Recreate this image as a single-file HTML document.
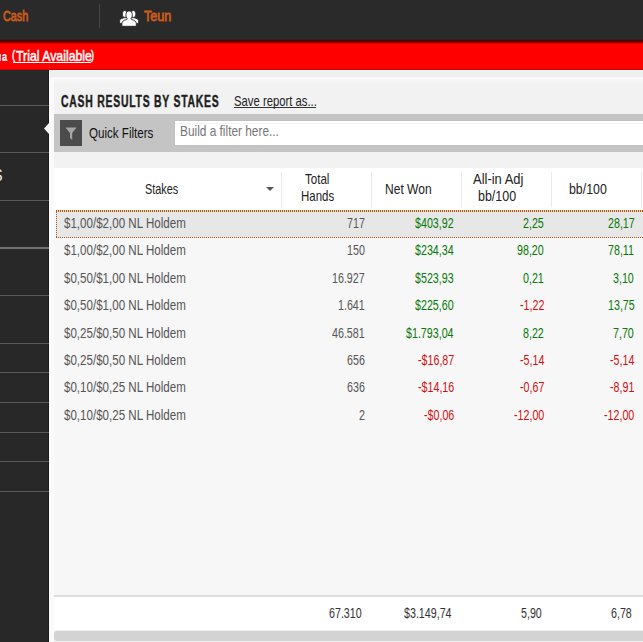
<!DOCTYPE html>
<html><head><meta charset="utf-8">
<style>
html,body{margin:0;padding:0}
body{width:643px;height:642px;overflow:hidden;position:relative;background:#efefef;font-family:"Liberation Sans",sans-serif}
.a{position:absolute}
.t{position:absolute;white-space:pre;line-height:normal;transform-origin:0 0;font-family:"Liberation Sans",sans-serif}
.u{text-decoration:underline}
</style></head><body>
<!-- top bar -->
<div class="a" style="left:0;top:0;width:643px;height:39px;background:#2a2a2a"></div>
<div class="a" style="left:0;top:39px;width:643px;height:5px;background:linear-gradient(#322424,#4e0303 35%,#5a0000 50%,#b00000 75%,#f80000)"></div>
<div class="a" style="left:99px;top:4px;width:1px;height:24px;background:#444"></div>
<!-- people icon -->
<svg class="a" style="left:110px;top:0px" width="40" height="40" viewBox="0 0 40 40">
  <g fill="#fff" stroke="#1e1e1e" stroke-width="0.8">
    <ellipse cx="14.8" cy="14" rx="2.5" ry="3.5"/>
    <ellipse cx="23.4" cy="14" rx="2.5" ry="3.5"/>
    <path d="M9.6 23.4 V20.8 Q9.6 18.6 13.2 18 L15 17.6 H17.5 V23.4 Z"/>
    <path d="M28.6 23.4 V20.8 Q28.6 18.6 25 18 L23.2 17.6 H20.7 V23.4 Z"/>
  </g>
  <g fill="#fff" stroke="#1e1e1e" stroke-width="0.85">
    <path d="M19.1 10.9 C21.1 10.9 22.3 12.4 22.3 14.8 C22.3 16.6 21.7 17.9 21 18.5 L21.3 19.4 C24.8 20.2 26.3 21.6 26.3 23.6 L26.3 26.3 L11.9 26.3 L11.9 23.6 C11.9 21.6 13.4 20.2 16.9 19.4 L17.2 18.5 C16.5 17.9 15.9 16.6 15.9 14.8 C15.9 12.4 17.1 10.9 19.1 10.9 Z"/>
  </g>
</svg>
<!-- red bar -->
<div class="a" style="left:0;top:44px;width:643px;height:25px;background:#ff0000"></div>
<div class="a" style="left:0;top:69px;width:643px;height:1px;background:#cf0000"></div>
<div class="a" style="left:13px;top:62px;width:78px;height:1px;background:#fff"></div>
<div class="a" style="left:0;top:54px;width:1px;height:7px;background:#ffb8b8"></div>
<!-- sidebar -->
<div class="a" style="left:0;top:70px;width:49px;height:572px;background:#282828"></div>
<div class="a" style="left:48px;top:70px;width:1px;height:572px;background:#1c1c1c"></div>
<div class="a" style="left:0;top:105px;width:49px;height:1px;background:#5a5a5a"></div>
<div class="a" style="left:0;top:152px;width:49px;height:1px;background:#5a5a5a"></div>
<div class="a" style="left:0;top:200px;width:49px;height:1px;background:#5a5a5a"></div>
<div class="a" style="left:0;top:247px;width:49px;height:2px;background:#707070"></div>
<div class="a" style="left:0;top:295px;width:49px;height:1px;background:#5a5a5a"></div>
<div class="a" style="left:0;top:343px;width:49px;height:1px;background:#5a5a5a"></div>
<div class="a" style="left:0;top:372px;width:49px;height:1px;background:#5a5a5a"></div>
<div class="a" style="left:0;top:402px;width:49px;height:1px;background:#5a5a5a"></div>
<div class="a" style="left:0;top:432px;width:49px;height:1px;background:#5a5a5a"></div>
<div class="a" style="left:0;top:461px;width:49px;height:1px;background:#5a5a5a"></div>
<div class="a" style="left:0;top:491px;width:49px;height:1px;background:#5a5a5a"></div>
<!-- partial s glyph -->
<div class="a" style="left:-8px;top:167px;font:16px 'Liberation Sans';color:#e4e4e4;line-height:normal">S</div>
<!-- arrow notch -->
<svg class="a" style="left:43px;top:122px" width="7" height="13"><path d="M1 6.5 L6 1 L6 12 Z" fill="#f4f4f4"/></svg>
<!-- main panel -->
<div class="a" style="left:49px;top:70px;width:594px;height:572px;background:#efefef"></div>
<div class="a" style="left:49px;top:70px;width:594px;height:1px;background:#fbfbfb"></div>
<div class="a" style="left:49px;top:70px;width:1px;height:572px;background:#fafafa"></div>
<div class="a" style="left:52px;top:77px;width:591px;height:565px;background:#f2f2f2"></div>
<div class="a" style="left:52px;top:77px;width:591px;height:5px;background:linear-gradient(#fbfbfb,#f9f9f9 40%,#f3f3f3)"></div>
<div class="a" style="left:50px;top:78px;width:4px;height:564px;background:#fafafa"></div>
<!-- filter bar -->
<div class="a" style="left:54px;top:114px;width:589px;height:38px;background:#c4c4c4"></div>
<div class="a" style="left:60px;top:120px;width:22px;height:26px;background:#4b4b4b"></div>
<svg class="a" style="left:64px;top:126px" width="14" height="16"><path d="M1.5 1.5 H12.5 L8.2 7 V14 L6 12 V7 Z" fill="#a6a6a6"/></svg>
<div class="a" style="left:174px;top:120px;width:469px;height:26px;background:#fff;box-sizing:border-box;border:1px solid #c0c0c0;border-right:none"></div>
<div class="a" style="left:175px;top:123px;width:468px;height:1px;background:#f3f3f3"></div>
<!-- table header -->
<div class="a" style="left:54px;top:168px;width:589px;height:42px;background:#fff"></div>
<div class="a" style="left:281px;top:172px;width:1px;height:35px;background:#eaeaea"></div>
<div class="a" style="left:371px;top:172px;width:1px;height:35px;background:#eaeaea"></div>
<div class="a" style="left:461px;top:172px;width:1px;height:35px;background:#eaeaea"></div>
<div class="a" style="left:551px;top:172px;width:1px;height:35px;background:#eaeaea"></div>
<div class="a" style="left:641px;top:172px;width:1px;height:35px;background:#eaeaea"></div>
<svg class="a" style="left:265px;top:186px" width="10" height="6"><path d="M1 1 H9 L5 5 Z" fill="#555"/></svg>
<!-- table body -->
<div class="a" style="left:54px;top:210px;width:589px;height:385px;background:#f7f7f7"></div>
<!-- selected row -->
<div class="a" style="left:56px;top:210px;width:587px;height:28px;background:#e7e7e7"></div>
<div class="a" style="left:56px;top:210px;width:587px;height:2px;background:repeating-linear-gradient(90deg,#a85a1c 0 1px,#f3d9b8 1px 2px)"></div>
<div class="a" style="left:56px;top:237px;width:587px;height:1px;background:repeating-linear-gradient(90deg,#9a5a2a 0 1px,#f7e3cc 1px 2px)"></div>
<div class="a" style="left:56px;top:212px;width:1px;height:25px;background:repeating-linear-gradient(180deg,#9a5a2a 0 1px,#f7e3cc 1px 2px)"></div>
<!-- footer -->
<div class="a" style="left:54px;top:595px;width:589px;height:2px;background:#dedede"></div>
<div class="a" style="left:54px;top:597px;width:589px;height:33px;background:#fff"></div>
<div class="a" style="left:54px;top:630.5px;width:589px;height:10.5px;background:#d3d3d3;border-radius:3px 0 0 3px"></div>
<div class="a" style="left:54px;top:641px;width:589px;height:1px;background:#efefef"></div>
<div class="a" style="left:234px;top:107px;width:82px;height:1px;background:#333"></div>
<span class="t" style="left:3.10px;top:8.00px;font-size:14.5px;font-weight:400;color:#c95c1b;transform:scaleX(0.7485);letter-spacing:0px;-webkit-text-stroke:0.8px currentColor">Cash</span>
<span class="t" style="left:144.00px;top:8.00px;font-size:14.5px;font-weight:400;color:#c95c1b;transform:scaleX(0.8710);letter-spacing:0px;-webkit-text-stroke:0.8px currentColor">Teun</span>
<span class="t" style="left:1.60px;top:49.00px;font-size:13px;font-weight:700;color:#fff;transform:scaleX(0.7000);letter-spacing:0px;-webkit-text-stroke:0.2px currentColor">a</span>
<span class="t" style="left:11.70px;top:47.70px;font-size:12.4px;font-weight:400;color:#fff;transform:scaleX(0.7750);letter-spacing:0px;-webkit-text-stroke:0.5px currentColor">(</span>
<span class="t" style="left:15.50px;top:47.50px;font-size:14.5px;font-weight:400;color:#fff;transform:scaleX(0.8483);letter-spacing:0px;-webkit-text-stroke:0.5px currentColor">Trial Available</span>
<span class="t" style="left:91.30px;top:47.70px;font-size:12.4px;font-weight:400;color:#fff;transform:scaleX(0.7250);letter-spacing:0px;-webkit-text-stroke:0.5px currentColor">)</span>
<span class="t" style="left:61.00px;top:93.00px;font-size:16px;font-weight:700;color:#1e1e1e;transform:scaleX(0.6490);letter-spacing:1.2px;-webkit-text-stroke:0.45px currentColor">CASH RESULTS BY STAKES</span>
<span class="t" style="left:233.70px;top:92.70px;font-size:14.2px;font-weight:400;color:#222;transform:scaleX(0.7961);letter-spacing:0px;-webkit-text-stroke:0px currentColor">Save report as...</span>
<span class="t" style="left:88.50px;top:125.00px;font-size:14.8px;font-weight:400;color:#111;transform:scaleX(0.7829);letter-spacing:0px;-webkit-text-stroke:0px currentColor">Quick Filters</span>
<span class="t" style="left:179.50px;top:122.90px;font-size:14.8px;font-weight:400;color:#767676;transform:scaleX(0.8017);letter-spacing:0px;-webkit-text-stroke:0px currentColor">Build a filter here...</span>
<span class="t" style="left:144.55px;top:181.00px;font-size:14.5px;font-weight:400;color:#222;transform:scaleX(0.7512);letter-spacing:0px;-webkit-text-stroke:0px currentColor">Stakes</span>
<span class="t" style="left:305.20px;top:171.00px;font-size:14.5px;font-weight:400;color:#222;transform:scaleX(0.7967);letter-spacing:0px;-webkit-text-stroke:0px currentColor">Total</span>
<span class="t" style="left:301.21px;top:188.00px;font-size:14.5px;font-weight:400;color:#222;transform:scaleX(0.7902);letter-spacing:0px;-webkit-text-stroke:0px currentColor">Hands</span>
<span class="t" style="left:384.67px;top:181.00px;font-size:14.5px;font-weight:400;color:#222;transform:scaleX(0.8309);letter-spacing:0px;-webkit-text-stroke:0px currentColor">Net Won</span>
<span class="t" style="left:473.10px;top:171.00px;font-size:14.5px;font-weight:400;color:#222;transform:scaleX(0.8929);letter-spacing:0px;-webkit-text-stroke:0px currentColor">All-in Adj</span>
<span class="t" style="left:478.44px;top:188.00px;font-size:14.5px;font-weight:400;color:#222;transform:scaleX(0.8581);letter-spacing:0px;-webkit-text-stroke:0px currentColor">bb/100</span>
<span class="t" style="left:568.55px;top:181.00px;font-size:14.5px;font-weight:400;color:#222;transform:scaleX(0.8512);letter-spacing:0px;-webkit-text-stroke:0px currentColor">bb/100</span>
<span class="t" style="left:63.90px;top:215.00px;font-size:14.5px;font-weight:400;color:#555;transform:scaleX(0.7980);letter-spacing:0px;-webkit-text-stroke:0px currentColor">$1,00/$2,00 NL Holdem</span>
<span class="t" style="left:346.91px;top:215.00px;font-size:14.5px;font-weight:400;color:#555;transform:scaleX(0.7370);letter-spacing:0px;-webkit-text-stroke:0px currentColor">717</span>
<span class="t" style="left:415.48px;top:215.00px;font-size:14.5px;font-weight:400;color:#087808;transform:scaleX(0.7370);letter-spacing:0px;-webkit-text-stroke:0px currentColor">$403,92</span>
<span class="t" style="left:523.36px;top:215.00px;font-size:14.5px;font-weight:400;color:#087808;transform:scaleX(0.7370);letter-spacing:0px;-webkit-text-stroke:0px currentColor">2,25</span>
<span class="t" style="left:607.57px;top:215.00px;font-size:14.5px;font-weight:400;color:#087808;transform:scaleX(0.7370);letter-spacing:0px;-webkit-text-stroke:0px currentColor">28,17</span>
<span class="t" style="left:63.90px;top:242.00px;font-size:14.5px;font-weight:400;color:#555;transform:scaleX(0.7980);letter-spacing:0px;-webkit-text-stroke:0px currentColor">$1,00/$2,00 NL Holdem</span>
<span class="t" style="left:346.91px;top:242.00px;font-size:14.5px;font-weight:400;color:#555;transform:scaleX(0.7370);letter-spacing:0px;-webkit-text-stroke:0px currentColor">150</span>
<span class="t" style="left:415.48px;top:242.00px;font-size:14.5px;font-weight:400;color:#087808;transform:scaleX(0.7370);letter-spacing:0px;-webkit-text-stroke:0px currentColor">$234,34</span>
<span class="t" style="left:517.47px;top:242.00px;font-size:14.5px;font-weight:400;color:#087808;transform:scaleX(0.7370);letter-spacing:0px;-webkit-text-stroke:0px currentColor">98,20</span>
<span class="t" style="left:608.31px;top:242.00px;font-size:14.5px;font-weight:400;color:#087808;transform:scaleX(0.7370);letter-spacing:0px;-webkit-text-stroke:0px currentColor">78,11</span>
<span class="t" style="left:63.90px;top:270.00px;font-size:14.5px;font-weight:400;color:#555;transform:scaleX(0.7980);letter-spacing:0px;-webkit-text-stroke:0px currentColor">$0,50/$1,00 NL Holdem</span>
<span class="t" style="left:332.17px;top:270.00px;font-size:14.5px;font-weight:400;color:#555;transform:scaleX(0.7370);letter-spacing:0px;-webkit-text-stroke:0px currentColor">16.927</span>
<span class="t" style="left:415.48px;top:270.00px;font-size:14.5px;font-weight:400;color:#087808;transform:scaleX(0.7370);letter-spacing:0px;-webkit-text-stroke:0px currentColor">$523,93</span>
<span class="t" style="left:523.36px;top:270.00px;font-size:14.5px;font-weight:400;color:#087808;transform:scaleX(0.7370);letter-spacing:0px;-webkit-text-stroke:0px currentColor">0,21</span>
<span class="t" style="left:613.46px;top:270.00px;font-size:14.5px;font-weight:400;color:#087808;transform:scaleX(0.7370);letter-spacing:0px;-webkit-text-stroke:0px currentColor">3,10</span>
<span class="t" style="left:63.90px;top:297.00px;font-size:14.5px;font-weight:400;color:#555;transform:scaleX(0.7980);letter-spacing:0px;-webkit-text-stroke:0px currentColor">$0,50/$1,00 NL Holdem</span>
<span class="t" style="left:338.07px;top:297.00px;font-size:14.5px;font-weight:400;color:#555;transform:scaleX(0.7370);letter-spacing:0px;-webkit-text-stroke:0px currentColor">1.641</span>
<span class="t" style="left:415.48px;top:297.00px;font-size:14.5px;font-weight:400;color:#087808;transform:scaleX(0.7370);letter-spacing:0px;-webkit-text-stroke:0px currentColor">$225,60</span>
<span class="t" style="left:519.68px;top:297.00px;font-size:14.5px;font-weight:400;color:#d01010;transform:scaleX(0.7370);letter-spacing:0px;-webkit-text-stroke:0px currentColor">-1,22</span>
<span class="t" style="left:607.57px;top:297.00px;font-size:14.5px;font-weight:400;color:#087808;transform:scaleX(0.7370);letter-spacing:0px;-webkit-text-stroke:0px currentColor">13,75</span>
<span class="t" style="left:63.90px;top:325.00px;font-size:14.5px;font-weight:400;color:#555;transform:scaleX(0.7980);letter-spacing:0px;-webkit-text-stroke:0px currentColor">$0,25/$0,50 NL Holdem</span>
<span class="t" style="left:332.17px;top:325.00px;font-size:14.5px;font-weight:400;color:#555;transform:scaleX(0.7370);letter-spacing:0px;-webkit-text-stroke:0px currentColor">46.581</span>
<span class="t" style="left:405.89px;top:325.00px;font-size:14.5px;font-weight:400;color:#087808;transform:scaleX(0.7370);letter-spacing:0px;-webkit-text-stroke:0px currentColor">$1.793,04</span>
<span class="t" style="left:523.36px;top:325.00px;font-size:14.5px;font-weight:400;color:#087808;transform:scaleX(0.7370);letter-spacing:0px;-webkit-text-stroke:0px currentColor">8,22</span>
<span class="t" style="left:613.46px;top:325.00px;font-size:14.5px;font-weight:400;color:#087808;transform:scaleX(0.7370);letter-spacing:0px;-webkit-text-stroke:0px currentColor">7,70</span>
<span class="t" style="left:63.90px;top:352.00px;font-size:14.5px;font-weight:400;color:#555;transform:scaleX(0.7980);letter-spacing:0px;-webkit-text-stroke:0px currentColor">$0,25/$0,50 NL Holdem</span>
<span class="t" style="left:346.91px;top:352.00px;font-size:14.5px;font-weight:400;color:#555;transform:scaleX(0.7370);letter-spacing:0px;-webkit-text-stroke:0px currentColor">656</span>
<span class="t" style="left:417.69px;top:352.00px;font-size:14.5px;font-weight:400;color:#d01010;transform:scaleX(0.7370);letter-spacing:0px;-webkit-text-stroke:0px currentColor">-$16,87</span>
<span class="t" style="left:519.68px;top:352.00px;font-size:14.5px;font-weight:400;color:#d01010;transform:scaleX(0.7370);letter-spacing:0px;-webkit-text-stroke:0px currentColor">-5,14</span>
<span class="t" style="left:609.78px;top:352.00px;font-size:14.5px;font-weight:400;color:#d01010;transform:scaleX(0.7370);letter-spacing:0px;-webkit-text-stroke:0px currentColor">-5,14</span>
<span class="t" style="left:63.90px;top:379.00px;font-size:14.5px;font-weight:400;color:#555;transform:scaleX(0.7980);letter-spacing:0px;-webkit-text-stroke:0px currentColor">$0,10/$0,25 NL Holdem</span>
<span class="t" style="left:346.91px;top:379.00px;font-size:14.5px;font-weight:400;color:#555;transform:scaleX(0.7370);letter-spacing:0px;-webkit-text-stroke:0px currentColor">636</span>
<span class="t" style="left:417.69px;top:379.00px;font-size:14.5px;font-weight:400;color:#d01010;transform:scaleX(0.7370);letter-spacing:0px;-webkit-text-stroke:0px currentColor">-$14,16</span>
<span class="t" style="left:519.68px;top:379.00px;font-size:14.5px;font-weight:400;color:#d01010;transform:scaleX(0.7370);letter-spacing:0px;-webkit-text-stroke:0px currentColor">-0,67</span>
<span class="t" style="left:609.78px;top:379.00px;font-size:14.5px;font-weight:400;color:#d01010;transform:scaleX(0.7370);letter-spacing:0px;-webkit-text-stroke:0px currentColor">-8,91</span>
<span class="t" style="left:63.90px;top:407.00px;font-size:14.5px;font-weight:400;color:#555;transform:scaleX(0.7980);letter-spacing:0px;-webkit-text-stroke:0px currentColor">$0,10/$0,25 NL Holdem</span>
<span class="t" style="left:358.70px;top:407.00px;font-size:14.5px;font-weight:400;color:#555;transform:scaleX(0.7370);letter-spacing:0px;-webkit-text-stroke:0px currentColor">2</span>
<span class="t" style="left:423.58px;top:407.00px;font-size:14.5px;font-weight:400;color:#d01010;transform:scaleX(0.7370);letter-spacing:0px;-webkit-text-stroke:0px currentColor">-$0,06</span>
<span class="t" style="left:513.78px;top:407.00px;font-size:14.5px;font-weight:400;color:#d01010;transform:scaleX(0.7370);letter-spacing:0px;-webkit-text-stroke:0px currentColor">-12,00</span>
<span class="t" style="left:603.88px;top:407.00px;font-size:14.5px;font-weight:400;color:#d01010;transform:scaleX(0.7370);letter-spacing:0px;-webkit-text-stroke:0px currentColor">-12,00</span>
<span class="t" style="left:328.67px;top:605.00px;font-size:14.5px;font-weight:400;color:#333;transform:scaleX(0.7370);letter-spacing:0px;-webkit-text-stroke:0px currentColor">67.310</span>
<span class="t" style="left:403.50px;top:605.00px;font-size:14.5px;font-weight:400;color:#333;transform:scaleX(0.7370);letter-spacing:0px;-webkit-text-stroke:0px currentColor">$3.149,74</span>
<span class="t" style="left:520.96px;top:605.00px;font-size:14.5px;font-weight:400;color:#333;transform:scaleX(0.7370);letter-spacing:0px;-webkit-text-stroke:0px currentColor">5,90</span>
<span class="t" style="left:610.86px;top:605.00px;font-size:14.5px;font-weight:400;color:#333;transform:scaleX(0.7370);letter-spacing:0px;-webkit-text-stroke:0px currentColor">6,78</span>
</body></html>
